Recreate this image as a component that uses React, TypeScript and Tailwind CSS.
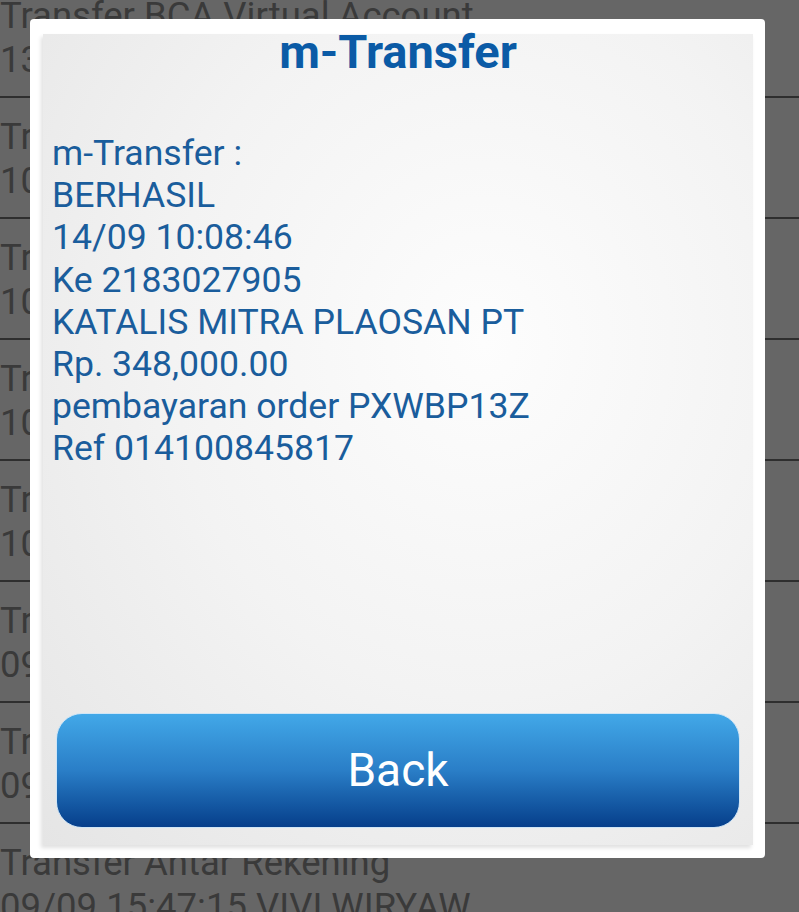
import React from 'react';

const rows = [
  { title: 'Transfer BCA Virtual Account', sub: '13/09 19:22:04 3901081234' },
  { title: 'Transfer Antar Rekening', sub: '10/09 20:11:38 SURYA ABADI' },
  { title: 'Transfer Antar Rekening', sub: '10/09 18:45:02 BUDI SANTOSO' },
  { title: 'Transfer BCA Virtual Account', sub: '10/09 14:03:51 3901087755' },
  { title: 'Transfer Antar Rekening', sub: '10/09 09:30:27 DEWI LESTARI' },
  { title: 'Transfer Antar Rekening', sub: '09/09 21:17:44 ANDI PRATAMA' },
  { title: 'Transfer BCA Virtual Account', sub: '09/09 17:58:09 3901081120' },
  { title: 'Transfer Antar Rekening', sub: '09/09 15:47:15 VIVI WIRYAW' },
];

const lines = [
  'm-Transfer :',
  'BERHASIL',
  '14/09 10:08:46',
  'Ke 2183027905',
  'KATALIS MITRA PLAOSAN PT',
  'Rp. 348,000.00',
  'pembayaran order PXWBP13Z',
  'Ref 014100845817',
];

export default function App() {
  return (
    <div className="relative h-[912px] w-[799px] overflow-hidden bg-[#666666] font-['Roboto',sans-serif]">
      {/* history list behind the dialog */}
      <div className="-mt-[23px] flex flex-col">
        {rows.map((row, i) => (
          <div key={i} className="h-[121px] shrink-0 border-b-2 border-[#2e2e2e] pt-[17px] text-[36.5px] leading-[44px] text-[#3a3a3a] whitespace-nowrap">
            <div>{row.title}</div>
            <div>{row.sub}</div>
          </div>
        ))}
      </div>

      {/* result dialog */}
      <div className="absolute left-[30px] top-[19px] h-[839px] w-[735px] rounded-[4px] bg-white pt-[15px] pr-[12px] pb-[13px] pl-[13px]">
        <div className="flex h-full flex-col bg-[radial-gradient(ellipse_at_62%_38%,#fdfdfd_0%,#f3f3f3_50%,#e5e5e5_100%)] shadow-[-2px_3px_4px_rgba(0,0,0,0.12)]">
          <h1 className="text-center text-[47px] font-bold leading-[36px] text-[#0b5ba6]">m-Transfer</h1>

          <div className="mt-[62px] pl-[9px] text-[35.6px] leading-[42.2px] text-[#1a5d9c]">
            {lines.map((l, i) => (
              <div key={i}>{l}</div>
            ))}
          </div>

          <button className="mx-[13px] mt-auto mb-[17px] flex h-[115px] items-center justify-center rounded-[26px] border border-[#cfe5f6] bg-linear-to-b from-[#42a8e8] via-[#2a7ec7] to-[#073f8b] text-[46px] text-white">
            Back
          </button>
        </div>
      </div>
    </div>
  );
}
